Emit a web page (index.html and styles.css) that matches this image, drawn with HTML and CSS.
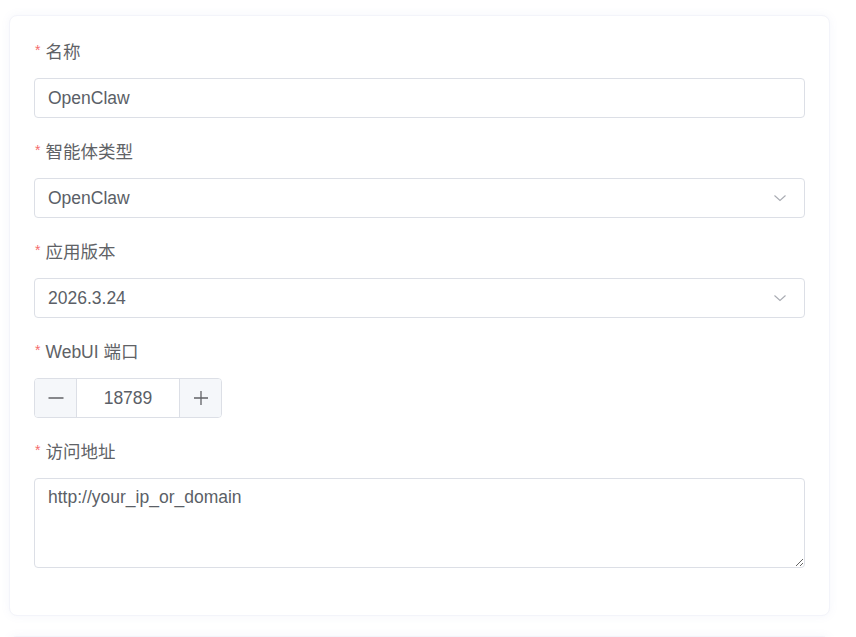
FILE: index.html
```html
<!DOCTYPE html>
<html lang="zh">
<head>
<meta charset="utf-8">
<link rel="stylesheet" href="styles.css">
</head>
<body>
<div class="page">
  <div class="card">
    <form class="form">
      <div class="item">
        <label class="label"><span class="req">*</span>名称</label>
        <div class="input"><input class="field" type="text" value="OpenClaw"></div>
      </div>
      <div class="item">
        <label class="label"><span class="req">*</span>智能体类型</label>
        <div class="input select"><span class="val">OpenClaw</span>
          <svg class="chev" width="14" height="14" viewBox="0 0 14 14"><path d="M1.5 4.5 L7 9.5 L12.5 4.5" fill="none" stroke="#a8abb2" stroke-width="1.1"/></svg>
        </div>
      </div>
      <div class="item">
        <label class="label"><span class="req">*</span>应用版本</label>
        <div class="input select"><span class="val">2026.3.24</span>
          <svg class="chev" width="14" height="14" viewBox="0 0 14 14"><path d="M1.5 4.5 L7 9.5 L12.5 4.5" fill="none" stroke="#a8abb2" stroke-width="1.1"/></svg>
        </div>
      </div>
      <div class="item">
        <label class="label"><span class="req">*</span>WebUI 端口</label>
        <div class="number">
          <span class="btn minus"><svg width="18" height="18" viewBox="0 0 18 18"><path d="M1.5 9 H16.5" stroke="#606266" stroke-width="1.3"/></svg></span>
          <span class="num">18789</span>
          <span class="btn plus"><svg width="18" height="18" viewBox="0 0 18 18"><path d="M2 9 H16 M9 2 V16" stroke="#606266" stroke-width="1.3"/></svg></span>
        </div>
      </div>
      <div class="item last">
        <label class="label"><span class="req">*</span>访问地址</label>
        <textarea class="area">http://your_ip_or_domain</textarea>
      </div>
    </form>
  </div>
  <div class="card next"></div>
</div>
</body>
</html>
```

FILE: styles.css
```css
html, body {
  margin: 0;
  padding: 0;
  background: #ffffff;
  overflow: hidden;
}
.page {
  padding: 15px 26px 0 9px;
  font-family: "Liberation Sans", Arial, "Noto Sans CJK SC", sans-serif;
  color: #606266;
}
.card {
  background: #fff;
  border: 1px solid #f3f4fa;
  border-radius: 8px;
  box-shadow: 0 0 10px rgba(120, 130, 200, 0.07);
  padding: 24px 24px 25px;
}
.card.next {
  margin-top: 20px;
  height: 60px;
  padding: 0;
}
.form {
  display: flex;
  flex-direction: column;
}
.item {
  display: flex;
  flex-direction: column;
  margin-bottom: 22px;
}
.label {
  font-size: 17.5px;
  line-height: 24px;
  height: 24px;
  padding-top: 0;
  margin-bottom: 14px;
  color: #606266;
  display: flex;
  align-items: center;
}
.req {
  color: #f56c6c;
  margin-right: 5px;
  margin-left: 1px;
  font-size: 14px;
  position: relative;
  top: -2px;
}
.input {
  height: 40px;
  box-sizing: border-box;
  border: 1px solid #dcdfe6;
  border-radius: 4px;
  display: flex;
  align-items: center;
  padding: 0 14px 0 13px;
  background: #fff;
}
.field {
  border: none;
  outline: none;
  padding: 0;
  margin: 0;
  width: 100%;
  font-family: inherit;
  font-size: 17.5px;
  color: #5b5f67;
  background: transparent;
}
.select {
  justify-content: space-between;
  padding-right: 17px;
}
.val {
  font-size: 17.5px;
  color: #5b5f67;
}
.chev {
  display: block;
}
.number {
  width: 188px;
  height: 40px;
  box-sizing: border-box;
  border: 1px solid #dcdfe6;
  border-radius: 4px;
  display: flex;
  overflow: hidden;
}
.btn {
  width: 41px;
  background: #f5f7fa;
  display: flex;
  align-items: center;
  justify-content: center;
}
.btn.minus {
  border-right: 1px solid #dcdfe6;
}
.btn.plus {
  border-left: 1px solid #dcdfe6;
}
.num {
  flex: 1;
  display: flex;
  align-items: center;
  justify-content: center;
  font-size: 17.5px;
  color: #5b5f67;
}
.area {
  display: block;
  height: 90px;
  box-sizing: border-box;
  border: 1px solid #dcdfe6;
  border-radius: 4px;
  padding: 5px 13px;
  font-family: inherit;
  font-size: 17.5px;
  line-height: 1.5;
  color: #5b5f67;
  resize: vertical;
  outline: none;
  margin: 0;
}
```
